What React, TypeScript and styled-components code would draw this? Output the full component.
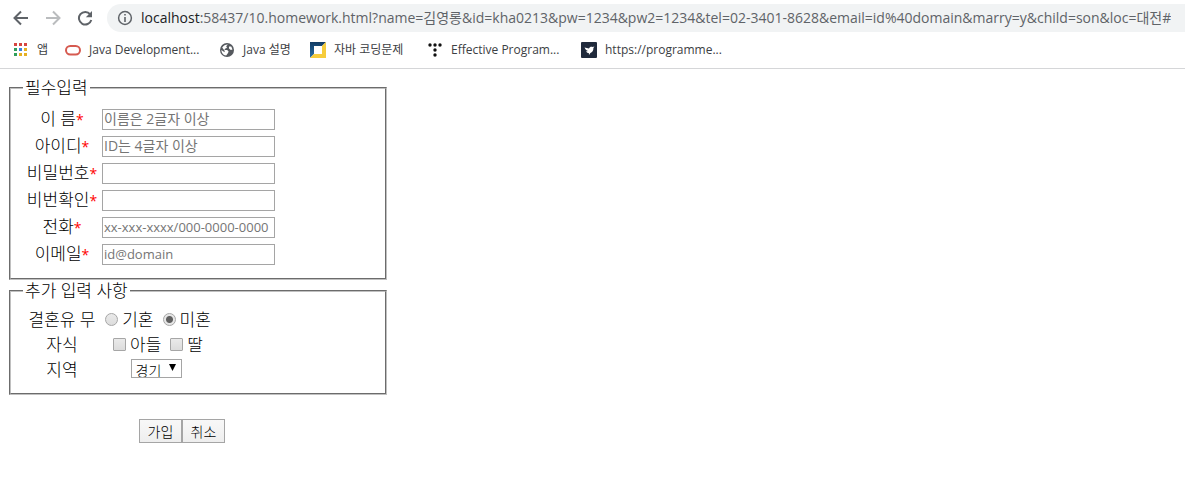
import React from "react";
import styled, { createGlobalStyle, css } from "styled-components";

const GlobalStyle = createGlobalStyle`
  * { box-sizing: border-box; }
  body {
    margin: 0;
    background: #fff;
    color: #000;
    font-family: "Open Sans", "Noto Sans CJK KR", sans-serif;
  }
`;

const Browser = styled.header`
  border-bottom: 1px solid #d5d6d8;
  padding-top: 4px;
`;

const NavRow = styled.div`
  display: flex;
  align-items: center;
  height: 28px;
  padding-left: 13px;
`;

const NavButton = styled.button`
  display: flex;
  width: 16px;
  height: 16px;
  margin-right: 16px;
  padding: 0;
  border: 0;
  background: none;
  color: #5f6368;
  &:disabled { color: #babcbe; }
  &:last-of-type { margin-right: 14px; }
`;

const AddressBar = styled.div`
  display: flex;
  flex: 1;
  align-items: center;
  gap: 8px;
  min-width: 0;
  height: 28px;
  padding-left: 10px;
  border-radius: 14px 0 0 14px;
  background: #f1f3f4;
  color: #5f6368;
  svg { flex: none; }
`;

const Url = styled.div`
  overflow: hidden;
  white-space: nowrap;
  font-size: 14px;
  line-height: 28px;
`;

const Host = styled.span`
  color: #202124;
`;

const Bookmarks = styled.nav`
  display: flex;
  align-items: center;
  height: 36px;
  padding-left: 13px;
`;

const Bookmark = styled.a<{ $width: number }>`
  display: flex;
  align-items: center;
  gap: 8px;
  width: ${({ $width }) => $width}px;
  color: #3c4043;
  font-size: 12px;
  line-height: 16px;
  text-decoration: none;
  white-space: nowrap;
  svg { flex: none; }
`;

const Form = styled.form`
  padding: 9px;
  font-weight: 300;
`;

const Group = styled.fieldset<{ $top: number; $bottom: number }>`
  width: 378px;
  max-width: 100%;
  margin: 0;
  padding: ${({ $top, $bottom }) => `${$top}px 14px ${$bottom}px 15px`};
  border: 2px groove #c0c0c0;
  & + & { margin-top: 1px; }
`;

const Legend = styled.legend`
  margin-left: -3px;
  padding: 0 2px;
  font-size: 17px;
  line-height: 20px;
`;

const Row = styled.div<{ $height: number }>`
  display: grid;
  grid-template-columns: 72px 112px;
  column-gap: 4px;
  align-items: center;
  height: ${({ $height }) => $height}px;
  font-size: 17px;
  line-height: 20px;
`;

const labelText = css`
  text-align: center;
  white-space: nowrap;
`;

const RowLabel = styled.label`
  ${labelText}
`;

const RowCaption = styled.span`
  ${labelText}
`;

const Required = styled.span`
  color: #f00;
  font-size: 14px;
  font-weight: 400;
`;

const TextInput = styled.input<{ $latin?: boolean }>`
  width: 173px;
  height: 21px;
  padding: 0 1px 2px;
  border: 1px solid #a5a5a5;
  border-radius: 0;
  background: #fff;
  font-family: "Open Sans", "Noto Sans CJK KR", sans-serif;
  font-size: ${({ $latin }) => ($latin ? 13 : 14)}px;
  &::placeholder { color: #757575; opacity: 1; }
`;

const Options = styled.div`
  display: flex;
  justify-content: center;
  gap: 9px;
  white-space: nowrap;
`;

const Option = styled.label`
  display: flex;
  align-items: center;
  gap: 4px;
`;

const Mark = styled.input`
  appearance: none;
  width: 13px;
  height: 13px;
  margin: 0;
  border: 1px solid #a6a6a6;
  background: linear-gradient(#eaeaea, #dcdcdc);
  &[type="radio"] { border-radius: 50%; }
  &[type="radio"]:checked {
    background: radial-gradient(circle, #606060 0 3px, #e6e6e6 4px);
  }
  &[type="checkbox"] { border-radius: 1px; }
`;

const Picker = styled.div`
  position: relative;
  justify-self: center;
  display: flex;
  width: 51px;
  height: 19px;
  margin: 0 4px 2px 0;
  svg {
    position: absolute;
    top: 5px;
    right: 6px;
    pointer-events: none;
  }
`;

const Select = styled.select`
  appearance: none;
  width: 100%;
  padding: 2px 0 0 4px;
  border: 1px solid #a5a5a5;
  border-radius: 0;
  background: #fff;
  color: #000;
  font-family: "Noto Sans CJK KR", sans-serif;
  font-size: 14px;
  font-weight: 300;
  line-height: 16px;
`;

const Actions = styled.div`
  display: flex;
  padding: 24px 0 0 130px;
`;

const ActionButton = styled.button`
  width: 43px;
  height: 24px;
  padding: 0 0 1px;
  border: 1px solid #a5a5a5;
  border-radius: 0;
  background: linear-gradient(#f8f8f8, #eeeeee);
  color: #000;
  font-family: "Noto Sans CJK KR", sans-serif;
  font-size: 14px;
  font-weight: 300;
  line-height: 20px;
`;

const Arrow = ({ flip = false }: { flip?: boolean }) => (
  <svg width="16" height="16" viewBox="0 0 16 16" fill="none" stroke="currentColor" strokeWidth="2">
    <path d={flip ? "M1 8H14M8 1.5L14.5 8L8 14.5" : "M15 8H2M8 1.5L1.5 8L8 14.5"} />
  </svg>
);

const Reload = () => (
  <svg width="16" height="16" viewBox="0 0 16 16">
    <path d="M13.2 4.3A6.3 6.3 0 1 0 14.3 10" fill="none" stroke="currentColor" strokeWidth="2" />
    <path d="M15 1V7.2H8.8Z" fill="currentColor" />
  </svg>
);

const Info = () => (
  <svg width="16" height="16" viewBox="0 0 16 16">
    <circle cx="8" cy="8" r="6.4" fill="none" stroke="currentColor" strokeWidth="1.5" />
    <path d="M7.2 7H8.8V12H7.2ZM7.2 4H8.8V5.6H7.2Z" fill="currentColor" />
  </svg>
);

const appColors = ["#d64541", "#d64541", "#d64541", "#2f9e5b", "#3b82e0", "#e6b022", "#2f9e5b", "#e6b022", "#e6b022"];

const AppsIcon = () => (
  <svg width="16" height="16" viewBox="0 0 16 16">
    {appColors.map((color, i) => (
      <rect key={i} x={1 + (i % 3) * 5} y={1 + Math.floor(i / 3) * 5} width="3" height="3" fill={color} />
    ))}
  </svg>
);

const OracleIcon = () => (
  <svg width="16" height="16" viewBox="0 0 16 16">
    <rect x="1" y="4" width="14" height="8.6" rx="4.3" fill="none" stroke="#d65a50" strokeWidth="2" />
  </svg>
);

const GlobeIcon = () => (
  <svg width="16" height="16" viewBox="0 0 16 16">
    <circle cx="8" cy="8" r="7" fill="#55595e" />
    <path d="M8.8 2.4L7.2 4.3L8 5.7L6 6.8L5.4 8H8.2L9.6 9.4L9 11L7.2 13.6C3.8 13.2 2.4 10.5 2.4 8L5.6 10.2V8.8L3.2 5.6C4.6 3 6.8 2.3 8.8 2.4Z" fill="#fff" />
    <path d="M10 4.6H12.2L13.5 7.4L11.8 8L10 6.5Z" fill="#fff" />
  </svg>
);

const CodingIcon = () => (
  <svg width="16" height="16" viewBox="0 0 16 16">
    <defs>
      <linearGradient id="codingBlue" x1="0" y1="0" x2="0" y2="1">
        <stop offset="0" stopColor="#123b63" />
        <stop offset="1" stopColor="#2870aa" />
      </linearGradient>
    </defs>
    <path d="M0 0H16L0 16Z" fill="url(#codingBlue)" />
    <path d="M16 0V16H0Z" fill="#f6cc3c" />
    <rect x="4" y="4" width="8" height="8" fill="#fff" />
  </svg>
);

const DotsIcon = () => (
  <svg width="16" height="16" viewBox="0 0 16 16" fill="#111">
    {[[3, 3], [8, 3], [13, 3], [8, 8], [8, 13]].map(([x, y]) => (
      <circle key={`${x}-${y}`} cx={x} cy={y} r="1.7" />
    ))}
  </svg>
);

const BirdIcon = () => (
  <svg width="16" height="16" viewBox="0 0 16 16">
    <rect width="16" height="16" rx="1" fill="#202a3c" />
    <path d="M3.6 5.4L8 6.4C8.6 4.8 10.4 4.2 11.6 5L13.4 4.6L12.4 6C12.6 8.6 11.2 10.4 9.4 11L8 13L7.8 11C6.4 10.8 5.6 10.2 5 9.4L7 9C5.4 8.4 4.2 7 3.6 5.4Z" fill="#fff" />
  </svg>
);

const requiredFields = [
  { id: "name", label: "이 름", placeholder: "이름은 2글자 이상" },
  { id: "id", label: "아이디", placeholder: "ID는 4글자 이상" },
  { id: "pw", label: "비밀번호", type: "password" },
  { id: "pw2", label: "비번확인", type: "password" },
  { id: "tel", label: "전화", placeholder: "xx-xxx-xxxx/000-0000-0000", latin: true },
  { id: "email", label: "이메일", placeholder: "id@domain", latin: true },
];

export default function App() {
  return (
    <>
      <GlobalStyle />
      <Browser>
        <NavRow>
          <NavButton aria-label="뒤로"><Arrow /></NavButton>
          <NavButton aria-label="앞으로" disabled><Arrow flip /></NavButton>
          <NavButton aria-label="새로고침"><Reload /></NavButton>
          <AddressBar>
            <Info />
            <Url>
              <Host>localhost</Host>
              :58437/10.homework.html?name=김영롱&amp;id=kha0213&amp;pw=1234&amp;pw2=1234&amp;tel=02-3401-8628&amp;email=id%40domain&amp;marry=y&amp;child=son&amp;loc=대전#
            </Url>
          </AddressBar>
        </NavRow>
        <Bookmarks>
          <Bookmark href="#" $width={52}><AppsIcon />앱</Bookmark>
          <Bookmark href="#" $width={154}><OracleIcon />Java Development...</Bookmark>
          <Bookmark href="#" $width={91}><GlobeIcon />Java 설명</Bookmark>
          <Bookmark href="#" $width={117}><CodingIcon />자바 코딩문제</Bookmark>
          <Bookmark href="#" $width={154}><DotsIcon />Effective Program...</Bookmark>
          <Bookmark href="#" $width={140}><BirdIcon />https://programme...</Bookmark>
        </Bookmarks>
      </Browser>
      <Form onSubmit={(event: React.FormEvent) => event.preventDefault()}>
        <Group $top={8} $bottom={10}>
          <Legend>필수입력</Legend>
          {requiredFields.map(({ id, label, placeholder, type = "text", latin }) => (
            <Row key={id} $height={27}>
              <RowLabel htmlFor={id}>{label}<Required>*</Required></RowLabel>
              <TextInput id={id} name={id} type={type} placeholder={placeholder} $latin={latin} />
            </Row>
          ))}
        </Group>
        <Group $top={6} $bottom={11}>
          <Legend>추가 입력 사항</Legend>
          <Row $height={25}>
            <RowCaption>결혼유 무</RowCaption>
            <Options role="radiogroup" aria-label="결혼유 무">
              <Option><Mark type="radio" name="marry" value="y" />기혼</Option>
              <Option><Mark type="radio" name="marry" value="n" defaultChecked />미혼</Option>
            </Options>
          </Row>
          <Row $height={25}>
            <RowCaption>자식</RowCaption>
            <Options role="group" aria-label="자식">
              <Option><Mark type="checkbox" name="child" value="son" />아들</Option>
              <Option><Mark type="checkbox" name="child" value="daughter" />딸</Option>
            </Options>
          </Row>
          <Row $height={25}>
            <RowLabel htmlFor="loc">지역</RowLabel>
            <Picker>
              <Select id="loc" name="loc" defaultValue="경기">
                <option>경기</option>
                <option>대전</option>
              </Select>
              <svg width="7" height="7" viewBox="0 0 7 7"><path d="M0 0H7L3.5 7Z" /></svg>
            </Picker>
          </Row>
        </Group>
        <Actions>
          <ActionButton type="submit">가입</ActionButton>
          <ActionButton type="reset">취소</ActionButton>
        </Actions>
      </Form>
    </>
  );
}
